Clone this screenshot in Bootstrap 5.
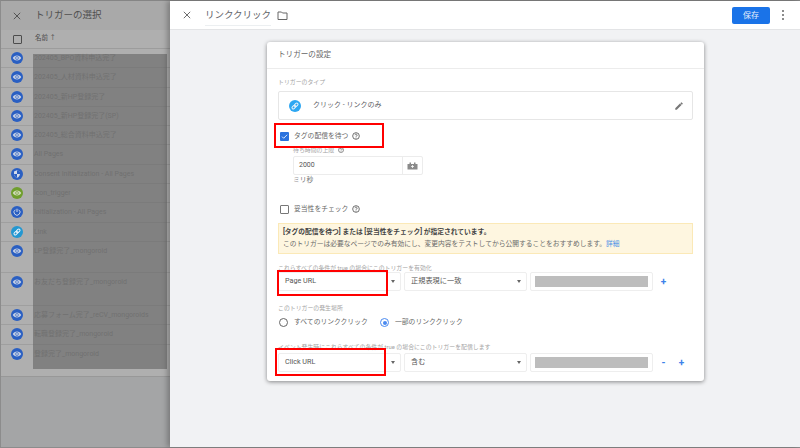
<!DOCTYPE html>
<html lang="ja">
<head>
    <meta charset="UTF-8">
    <meta name="viewport" content="width=device-width, initial-scale=1.0">
    <title>トリガーの選択</title>
    <link rel="stylesheet" href="https://cdn.jsdelivr.net/npm/bootstrap@5.3.3/dist/css/bootstrap.min.css">
    <style>
        html, body { height: 100%; overflow: hidden; }
        body { font-family: Roboto, "Noto Sans CJK JP", sans-serif; font-size: 8px; color: #5f6368; background: #f1f2f4; }
        .page-frame { height: 448px; border-top: 1px solid #858585; border-left: 1px solid #8c8c8c; border-bottom: 1px solid #8c8c8c; }

        /* left list, dimmed */
        .picker { width: 169px; background: #a4a5a6; color: #555; flex: none; }
        .picker-top { height: 29px; background: #a9a9a9; padding-left: 12px; }
        .picker-top .ttl { font-size: 9.5px; margin-left: 14px; color: #505050; }
        .picker-list { position: relative; background: #afafaf; height: 347px; border-bottom: 1px solid #989898; }
        .pick-head { height: 19px; padding-left: 12px; font-size: 6.5px; color: #4a4a4a; border-bottom: 1px solid #9c9c9c; }
        .pick-box { width: 9px; height: 9px; border: 1px solid #4d4d4d; border-radius: 1px; margin-right: 13px; }
        .pick-row { height: 19.3px; padding: 3px 0 0 10px; border-bottom: 1px solid #9f9f9f; color: #808080; font-size: 7px; line-height: 13px; }
        .pick-row.mid { height: 31px; }
        .pick-row.tall { height: 33px; }
        .pick-row.end { height: 33px; border-bottom: 0; }
        .pick-row svg { width: 12px; height: 12px; margin-right: 11px; flex: none; }
        .redact { position: absolute; left: 32px; top: 24px; width: 134px; height: 315px; background: rgba(104,104,104,.65); }

        /* right editor */
        .editor { min-width: 0; box-shadow: -3px 0 5px rgba(0,0,0,.25); position: relative; }
        .editor-top { height: 29px; background: #fff; border-bottom: 1px solid #e3e4e6; padding: 0 16px 0 13px; }
        .editor-top .ttl { font-size: 9.5px; margin-left: 14px; color: #5f6368; border-bottom: 1px solid #eceff1; line-height: 20px; height: 21px; }
        .save-btn { width: 38px; height: 17px; padding: 0; font-size: 8px; line-height: 17px; background: #1a73e8; border: 0; border-radius: 2px; color: #e3eefc; margin-right: 12px; }
        .dots { width: 2px; height: 10px; color: #666; }

        .form-card { width: 437px; height: 339px; margin: 12px 0 0 97px; background: #fff; border-radius: 3px; box-shadow: 0 1px 4px rgba(0,0,0,.45); }
        .form-title { height: 27px; padding-left: 11px; font-size: 7.6px; border-bottom: 1px solid #ececec; color: #666; }
        .form-body { padding: 8px 11px 0; position: relative; }
        .tiny { font-size: 5.9px; line-height: 10px; color: #a4a4a4; }
        .type-box { height: 29px; margin-top: 4px; border: 1px solid #e6e6e6; border-radius: 2px; padding: 0 8px 0 10px; font-size: 7px; }
        .type-box .ico { width: 12px; height: 12px; margin-right: 12px; }
        .opt { height: 12px; line-height: 12px; font-size: 6.8px; color: #666; }
        .tick { width: 9px; height: 9px; margin: 0 5px 0 2px; border-radius: 1px; flex: none; }
        .tick.on { background: #2a72de; }
        .tick.off { border: 1px solid #777; }
        .help { width: 8px; height: 8px; margin-left: 4px; }
        .wait-box { width: 130px; height: 19px; margin: 1px 0 0 15px; border: 1px solid #ececec; border-radius: 2px; }
        .wait-val { flex: 1; padding-left: 5px; font-size: 7px; border-right: 1px solid #ececec; height: 100%; line-height: 17px; color: #555; }
        .wait-ico { width: 19px; }
        .wait-unit { font-size: 6.8px; line-height: 10px; margin-left: 15px; color: #777; }
        .warn-box { height: 31px; margin-top: 8px; padding: 2px 4px; background: #fef6e0; border: 1px solid #fbe9b7; font-size: 6.75px; line-height: 12px; color: #6a6a6a; }
        .warn-box b { color: #444; font-weight: 700; }
        .warn-box a { color: #4a90e8; text-decoration: none; }
        .cond { position: relative; gap: 3px; height: 19px; }
        .pick-wide { width: 123px; height: 19px; flex: none; border: 1px solid #eeeeee; border-radius: 2px; padding: 0 5px 0 6px; font-size: 7.2px; color: #555; }
        .caret { width: 0; height: 0; border: 2.5px solid transparent; border-top: 3px solid #666; border-bottom: 0; }
        .val-box { width: 123px; height: 19px; flex: none; padding: 3px 4px; border: 1px solid #eeeeee; border-radius: 2px; }
        .val-fill { height: 100%; background: #bdbdbd; }
        .act { width: 15px; flex: none; text-align: center; color: #3d82ea; font-size: 10px; font-weight: 700; line-height: 18px; }
        .round { width: 9px; height: 9px; border-radius: 50%; border: 1px solid #666; margin: 0 6px 0 1px; flex: none; }
        .round.on { border-color: #4a8af0; padding: 1.5px; background: #4a8af0; background-clip: content-box; }
        .red-mark { position: absolute; border: 2.5px solid #f00; pointer-events: none; }
    </style>
</head>
<body>
    <svg width="0" height="0" class="position-absolute">
        <symbol id="eye" viewBox="0 0 24 24"><circle cx="12" cy="12" r="12" fill="#2a5fc2"/><path d="M12 7c-4 0-7 2.300-8.500 5 1.500 2.700 4.500 5 8.500 5s7-2.300 8.500-5C19 9.300 16 7 12 7zm0 8.300a3.300 3.300 0 1 1 0-6.600 3.300 3.300 0 0 1 0 6.600z" fill="#c4cfe4"/><circle cx="12" cy="12" r="2" fill="#c4cfe4"/></symbol>
        <symbol id="eye-green" viewBox="0 0 24 24"><circle cx="12" cy="12" r="12" fill="#6f9e2d"/><path d="M12 7c-4 0-7 2.300-8.500 5 1.500 2.700 4.500 5 8.500 5s7-2.300 8.500-5C19 9.300 16 7 12 7zm0 8.300a3.300 3.300 0 1 1 0-6.600 3.300 3.300 0 0 1 0 6.600z" fill="#cfdab8"/><circle cx="12" cy="12" r="2" fill="#cfdab8"/></symbol>
        <symbol id="shield" viewBox="0 0 24 24"><circle cx="12" cy="12" r="12" fill="#2a5fc2"/><path d="M12 4.500l6 2.500v4.500c0 3.800-2.500 6.800-6 8-3.500-1.200-6-4.200-6-8V7z" fill="#d5dcea"/><path d="M12 4.500l6 2.500v5h-6zM12 12v7.500c-3-1.100-5.300-3.800-6-7.500z" fill="#2a5fc2"/></symbol>
        <symbol id="power" viewBox="0 0 24 24"><circle cx="12" cy="12" r="12" fill="#2a5fc2"/><path d="M12 5.500v6.500" stroke="#d5dcea" stroke-width="2" fill="none"/><path d="M8.500 7.500a6 6 0 1 0 7 0" stroke="#d5dcea" stroke-width="1.800" fill="none"/></symbol>
        <symbol id="link" viewBox="0 0 24 24"><circle cx="12" cy="12" r="12" fill="currentColor"/><g fill="none" stroke="#e8f2fa" stroke-width="2" transform="rotate(-45 12 12)"><rect x="4.500" y="9.500" width="8.500" height="5" rx="2.500"/><rect x="11" y="9.500" width="8.500" height="5" rx="2.500"/></g></symbol>
        <symbol id="help" viewBox="0 0 24 24"><circle cx="12" cy="12" r="10" fill="none" stroke="#555" stroke-width="2.500"/><path d="M8.800 9.500a3.200 3.200 0 1 1 4.800 2.800c-1 .6-1.600 1.200-1.600 2.500" fill="none" stroke="#555" stroke-width="2.500"/><circle cx="12" cy="18" r="1.500" fill="#555"/></symbol>
    </svg>

    <div class="page-frame d-flex">
        <aside class="picker">
            <div class="picker-top d-flex align-items-center">
                <svg width="8" height="8" viewBox="0 0 10 10"><path d="M1 1l8 8M9 1l-8 8" stroke="#505050" stroke-width="1.200"/></svg>
                <span class="ttl">トリガーの選択</span>
            </div>
            <div class="picker-list">
                <div class="pick-head d-flex align-items-center"><span class="pick-box"></span><span>名前 ↑</span></div>
                <div class="pick-row d-flex"><svg><use href="#eye"/></svg>202405_BPO資料申込完了</div>
                <div class="pick-row d-flex"><svg><use href="#eye"/></svg>202405_人材資料申込完了</div>
                <div class="pick-row d-flex"><svg><use href="#eye"/></svg>202405_新HP登録完了</div>
                <div class="pick-row d-flex"><svg><use href="#eye"/></svg>202405_新HP登録完了(SP)</div>
                <div class="pick-row d-flex"><svg><use href="#eye"/></svg>202405_総合資料申込完了</div>
                <div class="pick-row d-flex"><svg><use href="#eye"/></svg>All Pages</div>
                <div class="pick-row d-flex"><svg><use href="#shield"/></svg>Consent Initialization - All Pages</div>
                <div class="pick-row d-flex"><svg><use href="#eye-green"/></svg>icon_trigger</div>
                <div class="pick-row d-flex"><svg><use href="#power"/></svg>Initialization - All Pages</div>
                <div class="pick-row d-flex"><svg style="color:#2397d1"><use href="#link"/></svg>Link</div>
                <div class="pick-row mid d-flex"><svg><use href="#eye"/></svg>LP登録完了_mongoroid</div>
                <div class="pick-row tall d-flex"><svg><use href="#eye"/></svg>お友だち登録完了_mongoroid</div>
                <div class="pick-row d-flex"><svg><use href="#eye"/></svg>応募フォーム完了_reCV_mongoroids</div>
                <div class="pick-row d-flex"><svg><use href="#eye"/></svg>転職登録完了_mongoroid</div>
                <div class="pick-row end d-flex"><svg><use href="#eye"/></svg>登録完了_mongoroid</div>
                <div class="redact"></div>
            </div>
        </aside>

        <main class="editor flex-grow-1">
            <div class="editor-top d-flex align-items-center">
                <svg width="8" height="8" viewBox="0 0 10 10"><path d="M1 1l8 8M9 1l-8 8" stroke="#666" stroke-width="1.200"/></svg>
                <span class="ttl">リンククリック</span>
                <svg style="margin-left:6px" width="11" height="9" viewBox="0 0 22 18"><path d="M2 2h7l2 2h9v13H2z" fill="none" stroke="#666" stroke-width="2"/></svg>
                <button type="button" class="btn save-btn ms-auto">保存</button>
                <svg class="dots" viewBox="0 0 2 10"><circle cx="1" cy="1" r="1" fill="#666"/><circle cx="1" cy="5" r="1" fill="#666"/><circle cx="1" cy="9" r="1" fill="#666"/></svg>
            </div>

            <section class="form-card">
                <div class="form-title d-flex align-items-center">トリガーの設定</div>
                <div class="form-body">
                    <div class="tiny">トリガーのタイプ</div>
                    <div class="type-box d-flex align-items-center">
                        <svg class="ico" style="color:#2ea7f2"><use href="#link"/></svg>
                        <span>クリック - リンクのみ</span>
                        <svg class="ms-auto" width="10" height="10" viewBox="0 0 24 24"><path d="M3 17.300V21h3.700L18 9.700 14.300 6zM20.700 7a1 1 0 0 0 0-1.400l-2.300-2.300a1 1 0 0 0-1.400 0l-1.800 1.800 3.700 3.700z" fill="#777"/></svg>
                    </div>

                    <div class="opt d-flex align-items-center mt-2 pt-1">
                        <span class="tick on d-flex align-items-center justify-content-center"><svg width="7" height="7" viewBox="0 0 10 10"><path d="M1.500 5.200l2.300 2.300 5-5" fill="none" stroke="#fff" stroke-width="1.200"/></svg></span>
                        <span>タグの配信を待つ</span><svg class="help"><use href="#help"/></svg>
                    </div>
                    <div class="tiny d-flex align-items-center" style="margin:5px 0 0 15px">待ち時間の上限<svg class="help" style="width:6px;height:6px"><use href="#help"/></svg></div>
                    <div class="wait-box d-flex align-items-center">
                        <div class="wait-val">2000</div>
                        <div class="wait-ico d-flex justify-content-center"><svg width="11" height="8" viewBox="0 0 22 16"><path d="M1 4h4V1h3v3h6V1h3v3h4v11H1z" fill="#8a8a8a"/><path d="M11 6v6M8 9h6" stroke="#fff" stroke-width="1.500"/></svg></div>
                    </div>
                    <div class="wait-unit">ミリ秒</div>

                    <div class="opt d-flex align-items-center" style="margin-top:18px">
                        <span class="tick off"></span><span>妥当性をチェック</span><svg class="help"><use href="#help"/></svg>
                    </div>
                    <div class="warn-box">
                        <div><b>[タグの配信を待つ] または [妥当性をチェック] が指定されています。</b></div>
                        <div>このトリガーは必要なページでのみ有効にし、変更内容をテストしてから公開することをおすすめします。<a href="#">詳細</a></div>
                    </div>

                    <div class="tiny" style="margin-top:9px">これらすべての条件が true の場合にこのトリガーを有効化</div>
                    <div class="cond d-flex align-items-center" style="margin-top:-1px">
                        <div class="pick-wide d-flex align-items-center justify-content-between"><span>Page URL</span><span class="caret"></span></div>
                        <div class="pick-wide d-flex align-items-center justify-content-between"><span>正規表現に一致</span><span class="caret"></span></div>
                        <div class="val-box"><div class="val-fill"></div></div>
                        <div class="act">+</div>
                        <div class="red-mark" style="left:-1px;top:-2px;width:111px;height:26px"></div>
                    </div>

                    <div class="tiny" style="margin-top:12px">このトリガーの発生場所</div>
                    <div class="opt d-flex align-items-center" style="margin-top:3px">
                        <span class="round"></span><span style="width:85px">すべてのリンククリック</span>
                        <span class="round on"></span><span>一部のリンククリック</span>
                    </div>
                    <div class="tiny" style="margin-top:14px">イベント発生時にこれらすべての条件が true の場合にこのトリガーを配信します</div>
                    <div class="cond d-flex align-items-center" style="margin-top:1px">
                        <div class="pick-wide d-flex align-items-center justify-content-between"><span>Click URL</span><span class="caret"></span></div>
                        <div class="pick-wide d-flex align-items-center justify-content-between"><span>含む</span><span class="caret"></span></div>
                        <div class="val-box"><div class="val-fill"></div></div>
                        <div class="act">-</div>
                        <div class="act">+</div>
                        <div class="red-mark" style="left:-3px;top:-5px;width:111px;height:28px"></div>
                    </div>

                    <div class="red-mark" style="left:7px;top:54px;width:110px;height:25px"></div>
                </div>
            </section>
        </main>
    </div>
</body>
</html>
